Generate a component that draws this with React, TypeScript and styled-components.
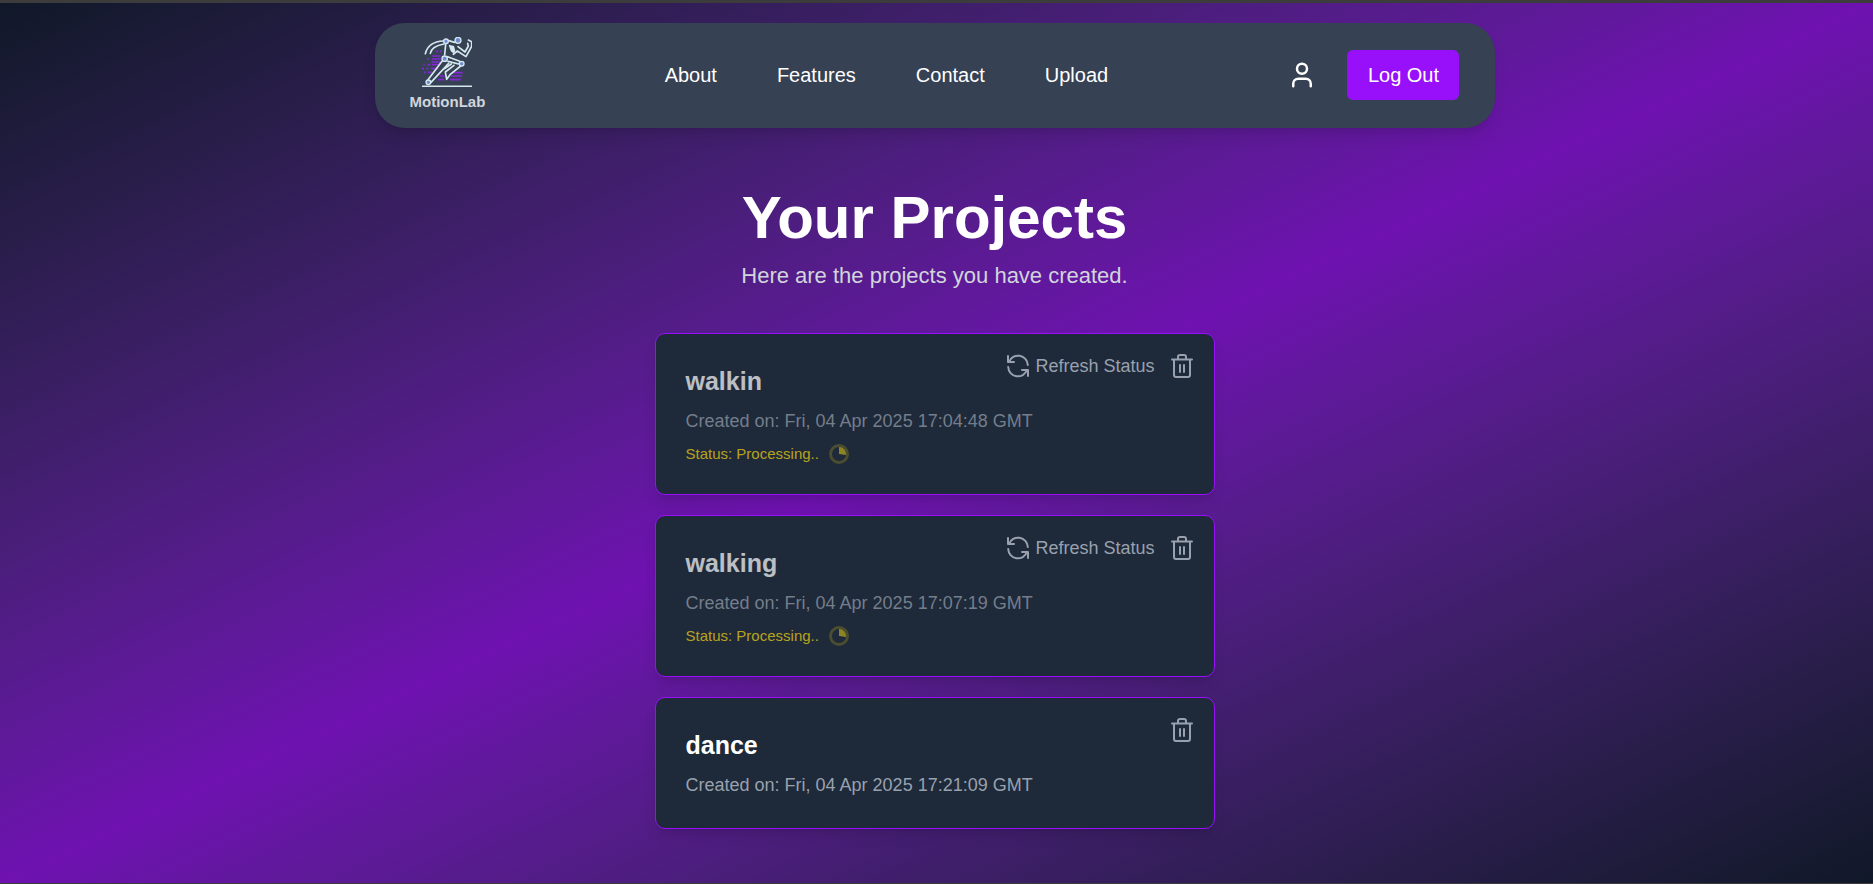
import React from "react";
import styled, { createGlobalStyle } from "styled-components";
import { User } from "lucide-react";

const GlobalStyle = createGlobalStyle`
  * { box-sizing: border-box; }
  body {
    margin: 0;
    font-family: "Liberation Sans", Arial, sans-serif;
    background: #101828;
  }
`;

const Page = styled.div`
  min-height: 100vh;
  display: flex;
  flex-direction: column;
  align-items: center;
  padding: 20px 24px 50px 20px;
  border-top: 3px solid #3c3c3c;
  border-bottom: 1px solid #3c3c3c;
  color: #fff;
  background: linear-gradient(to bottom right in oklab, #101828, #6e11b0, #101828);
`;

const Header = styled.header`
  width: 100%;
  max-width: 1120px;
  height: 105px;
  padding: 0 35px 1px;
  display: flex;
  align-items: center;
  justify-content: space-between;
  border-radius: 30px;
  background: #364153;
  box-shadow: 0 10px 15px -3px rgba(0, 0, 0, 0.1), 0 4px 6px -4px rgba(0, 0, 0, 0.1);
`;

const Brand = styled.a`
  display: flex;
  flex-direction: column;
  align-items: center;
  gap: 6px;
  padding-bottom: 2px;
  color: #d1d5dc;
  font-size: 15px;
  font-weight: 700;
  line-height: 18px;
  text-decoration: none;
`;

const Links = styled.nav`
  display: flex;
  gap: 60px;
`;

const NavLink = styled.a`
  color: #fff;
  font-size: 20px;
  line-height: 30px;
  text-decoration: none;
`;

const Account = styled.div`
  display: flex;
  align-items: center;
  gap: 30px;
`;

const IconButton = styled.button`
  display: flex;
  align-items: center;
  gap: 5px;
  padding: 0;
  border: 0;
  background: none;
  color: inherit;
  font: inherit;
  white-space: nowrap;
  cursor: pointer;
`;

const LogOut = styled.button`
  min-width: 112px;
  height: 50px;
  padding: 0 20px;
  border: 0;
  border-radius: 6px;
  background: #9810fa;
  color: #fff;
  font: inherit;
  font-size: 20px;
  line-height: 30px;
  cursor: pointer;
`;

const Main = styled.main`
  width: 100%;
  max-width: 560px;
  display: flex;
  flex-direction: column;
  align-items: center;
  padding-top: 60px;
`;

const Heading = styled.h1`
  margin: 0;
  font-size: 60px;
  line-height: 60px;
`;

const Subtitle = styled.p`
  margin: 10px 0 40px;
  color: #d1d5dc;
  font-size: 22px;
  line-height: 35px;
`;

const ProjectList = styled.ul`
  width: 100%;
  margin: 0;
  padding: 0;
  display: flex;
  flex-direction: column;
  gap: 20px;
  list-style: none;
`;

const Card = styled.li`
  padding: 20px 20px 29px 30px;
  border: 1px solid #9810fa;
  border-radius: 10px;
  background: #1e2939;
  box-shadow: 0 10px 15px -3px rgba(0, 0, 0, 0.1), 0 4px 6px -4px rgba(0, 0, 0, 0.1);
`;

const CardTop = styled.div`
  display: flex;
  justify-content: space-between;
  align-items: flex-start;
`;

const Title = styled.h2<{ $pending: boolean }>`
  margin: 0;
  padding: 10px 0 9px;
  font-size: 25px;
  line-height: 35px;
  opacity: ${(p) => (p.$pending ? 0.7 : 1)};
`;

const Details = styled.div<{ $pending: boolean }>`
  opacity: ${(p) => (p.$pending ? 0.7 : 1)};
`;

const Created = styled.p`
  margin: 0;
  color: #99a1af;
  font-size: 18px;
  line-height: 27px;
`;

const Status = styled.p`
  margin: 8px 0 0;
  display: flex;
  align-items: center;
  gap: 10px;
  color: #f5d714;
  font-size: 15px;
  line-height: 22px;
`;

const Actions = styled.div`
  display: flex;
  align-items: center;
  gap: 15px;
  color: #99a1af;
  font-size: 18px;
  line-height: 24px;
`;

const Runner = () => (
  <svg width="50" height="50" viewBox="12 11 150 150" fill="none" strokeLinecap="round" strokeLinejoin="round" aria-hidden="true">
    <g stroke="#8428d8" strokeWidth="5" strokeLinecap="butt">
      <path d="M54 54h6M65 54h6M43 68h24M27 77h6M42 77h26M40 86h28M16 94h4M29 94h8M42 94h22M12 106h6M25 106h6M39 106h22M17 117h6M30 117h12" />
      <path d="M106 118h28M98 128h34M66 128h14M60 139h18M96 139h32" />
    </g>
    <g stroke="#d5e8ee" strokeWidth="5">
      <path d="M76 23C48 24 28 38 22 61M78 32C54 36 40 44 37 60" />
      <path d="M92 22l18 5M83 34l-3 30" />
      <path d="M106 63l12-10 26 17 17-31v-14l-10-5M120 40l21 16 10-18-2-8" />
      <path d="M89 70l36 14M90 84l32 8M108 96L82 116l4 22 10-14 32-26M100 92L80 106" />
      <path d="M72 84L30 139M92 90L39 147" />
      <path d="M14 159h146" />
    </g>
    <path d="M92 34l16 4 4 14-5 9-9-8z" fill="#d5e8ee" />
    <g fill="#6d8ad2" stroke="#d5e8ee" strokeWidth="4">
      <circle cx="84" cy="24" r="7" />
      <circle cx="120" cy="21" r="9" />
      <circle cx="80" cy="76" r="8" />
      <circle cx="131" cy="91" r="7" />
      <circle cx="31" cy="147" r="7" />
    </g>
  </svg>
);

const RefreshIcon = () => (
  <svg width="24" height="24" viewBox="0 0 24 24" fill="none" stroke="currentColor" strokeWidth="2" strokeLinecap="round" strokeLinejoin="round" aria-hidden="true">
    <path d="M2 2v6h6M3 8A9.700 9.700 0 0 1 21.800 11M22 22v-6h-6M21 16A9.700 9.700 0 0 1 2.200 13" />
  </svg>
);

const TrashIcon = () => (
  <svg width="24" height="24" viewBox="0 0 24 24" fill="none" stroke="currentColor" strokeWidth="2" strokeLinecap="round" strokeLinejoin="round" aria-hidden="true">
    <path d="M2 5.500h20M4 5.500V21a2 2 0 0 0 2 2h12a2 2 0 0 0 2-2V5.500M8 5.500V3a2 2 0 0 1 2-2h4a2 2 0 0 1 2 2v2.500M10 11v7M14 11v7" />
  </svg>
);

const ProgressIcon = () => (
  <svg width="20" height="20" viewBox="0 0 20 20" fill="none" aria-hidden="true">
    <circle cx="10" cy="10" r="8.500" stroke="currentColor" strokeWidth="3" opacity="0.3" />
    <path d="M10 10V3A7 7 0 0 1 17 11z" fill="currentColor" opacity="0.75" />
  </svg>
);

const links = ["About", "Features", "Contact", "Upload"];

const projects = [
  { name: "walkin", created: "Fri, 04 Apr 2025 17:04:48 GMT", pending: true },
  { name: "walking", created: "Fri, 04 Apr 2025 17:07:19 GMT", pending: true },
  { name: "dance", created: "Fri, 04 Apr 2025 17:21:09 GMT", pending: false },
];

export default function App() {
  return (
    <Page>
      <GlobalStyle />
      <Header>
        <Brand href="#">
          <Runner />
          MotionLab
        </Brand>
        <Links>
          {links.map((l) => (
            <NavLink key={l} href={`#${l.toLowerCase()}`}>{l}</NavLink>
          ))}
        </Links>
        <Account>
          <IconButton type="button" aria-label="Profile">
            <User size={30} />
          </IconButton>
          <LogOut type="button">Log Out</LogOut>
        </Account>
      </Header>
      <Main>
        <Heading>Your Projects</Heading>
        <Subtitle>Here are the projects you have created.</Subtitle>
        <ProjectList>
          {projects.map((p) => (
            <Card key={p.name}>
              <CardTop>
                <Title $pending={p.pending}>{p.name}</Title>
                <Actions>
                  {p.pending && (
                    <IconButton type="button">
                      <RefreshIcon />
                      Refresh Status
                    </IconButton>
                  )}
                  <IconButton type="button" aria-label={`Delete ${p.name}`}>
                    <TrashIcon />
                  </IconButton>
                </Actions>
              </CardTop>
              <Details $pending={p.pending}>
                <Created>Created on: {p.created}</Created>
                {p.pending && (
                  <Status>
                    Status: Processing..
                    <ProgressIcon />
                  </Status>
                )}
              </Details>
            </Card>
          ))}
        </ProjectList>
      </Main>
    </Page>
  );
}
